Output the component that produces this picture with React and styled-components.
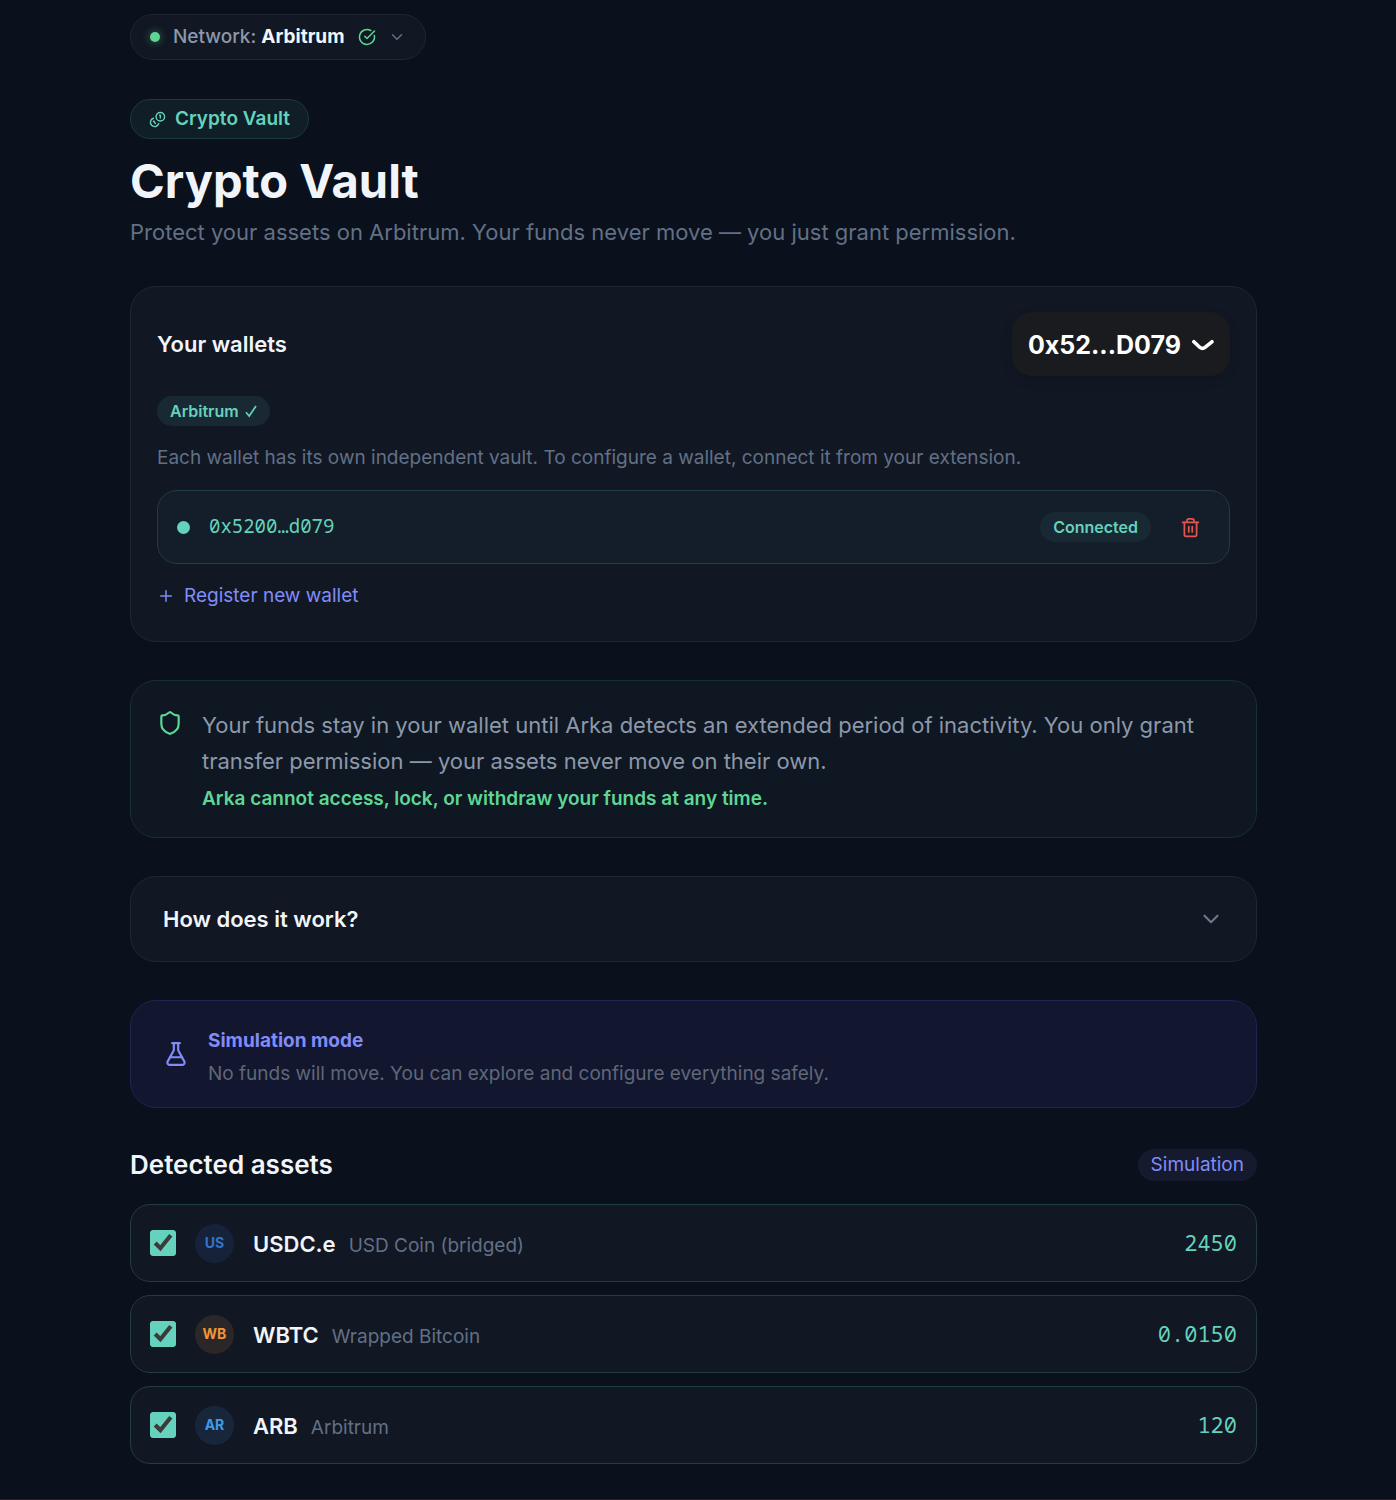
import React, { useState } from 'react'
import styled, { createGlobalStyle } from 'styled-components'
import { ChevronDown, CircleCheckBig, FlaskConical, Plus, Shield, Trash2 } from 'lucide-react'

const colors = {
  background: '#0a101c',
  card: '#111723',
  border: '#1f2632',
  white: '#f1f5f9',
  grey: '#8d98aa',
  muted: '#627086',
  teal: '#64d2bc',
  tealBorder: '#213c44',
  green: '#5fd695',
  purple: '#818cf8',
  red: '#e5534f',
}

const mono = '"Noto Sans Mono", "DejaVu Sans Mono", monospace'

const ASSETS = [
  { symbol: 'USDC.e', name: 'USD Coin (bridged)', balance: '2450', color: '#3674c8', background: '#15223a' },
  { symbol: 'WBTC', name: 'Wrapped Bitcoin', balance: '0.0150', color: '#f0953a', background: '#2b2628' },
  { symbol: 'ARB', name: 'Arbitrum', balance: '120', color: '#4399e6', background: '#18263c' },
]

const GlobalStyle = createGlobalStyle`
  * {
    box-sizing: border-box;
  }

  body {
    margin: 0;
    background: ${colors.background};
    color: ${colors.white};
    font-family: Inter, sans-serif;
    font-size: 19px;
    line-height: 28px;
  }

  h1, h2, p {
    margin: 0;
  }

  button {
    font: inherit;
    color: inherit;
    border: 0;
    background: none;
    padding: 0;
    cursor: pointer;
  }
`;

const Page = styled.main`
  padding: 14px 139px 35px 130px;
  border-bottom: 1px solid #2a2430;
`;

const NetworkButton = styled.button`
  display: flex;
  align-items: center;
  height: 46px;
  padding: 0 19px;
  border: 1px solid ${colors.border};
  border-radius: 23px;
  background: ${colors.card};
  color: ${colors.grey};
  font-weight: 500;

  strong {
    color: ${colors.white};
    font-weight: 700;
  }
`;

const NetworkLabel = styled.span`
  margin: 0 13px;
`;

const NetworkChevron = styled(ChevronDown)`
  margin-left: 12px;
  color: ${colors.muted};
`;

const Dot = styled.span`
  flex: none;
  width: ${props => props.$size}px;
  height: ${props => props.$size}px;
  border-radius: 50%;
  background: ${props => props.$color};
  box-shadow: ${props => props.$glow ? `0 0 8px ${props.$color}80` : 'none'};
`;

const Header = styled.header`
  margin: 39px 0 37px;
`;

const VaultBadge = styled.span`
  display: inline-flex;
  align-items: center;
  gap: 9px;
  height: 40px;
  padding: 0 18px;
  border: 1px solid #1c3a40;
  border-radius: 20px;
  background: #101e28;
  color: ${colors.teal};
  font-weight: 600;
`;

const Title = styled.h1`
  margin-top: 12px;
  font-size: 47px;
  line-height: 60px;
  font-weight: 700;
`;

const Subtitle = styled.p`
  margin-top: 4px;
  color: ${colors.muted};
  font-size: 22px;
  line-height: 34px;
`;

const Stack = styled.div`
  display: flex;
  flex-direction: column;
  gap: 38px;
`;

const Card = styled.section`
  border: 1px solid ${props => props.$border || colors.border};
  border-radius: 26px;
  background: ${props => props.$background || colors.card};
`;

const WalletsCard = styled(Card)`
  padding: 25px 26px 31px;
`;

const SplitRow = styled.div`
  display: flex;
  align-items: center;
  justify-content: space-between;
`;

const CardTitle = styled.h2`
  font-size: 22px;
  font-weight: 600;
`;

const AccountButton = styled.button`
  display: flex;
  align-items: center;
  gap: 10px;
  height: 64px;
  padding: 2px 16px 0;
  border-radius: 20px;
  background: #1a1b1f;
  color: #fff;
  font-size: 25px;
  font-weight: 700;
  box-shadow: 0 4px 12px rgba(0, 0, 0, 0.1);
`;

const Chip = styled.span`
  display: inline-flex;
  align-items: center;
  gap: 6px;
  height: 30px;
  padding: 0 13px;
  border-radius: 15px;
  background: #192933;
  color: ${colors.teal};
  font-size: 16px;
  font-weight: 600;
`;

const ChipRow = styled.div`
  display: flex;
  margin-top: 20px;
`;

const Hint = styled.p`
  margin-top: 18px;
  color: ${colors.muted};
`;

const WalletRow = styled.div`
  display: flex;
  align-items: center;
  height: 74px;
  margin-top: 18px;
  padding: 0 28px 0 19px;
  border: 1px solid ${colors.tealBorder};
  border-radius: 20px;
  background: #141e2a;
`;

const Address = styled.span`
  flex: 1;
  margin-left: 19px;
  padding-bottom: 2px;
  color: ${colors.teal};
  font-family: ${mono};
`;

const DeleteButton = styled.button`
  display: flex;
  margin-left: 29px;
  color: ${colors.red};
`;

const RegisterButton = styled.button`
  display: flex;
  align-items: center;
  gap: 9px;
  margin-top: 18px;
  color: ${colors.purple};
`;

const InfoCard = styled(Card)`
  display: flex;
  gap: 19px;
  padding: 26px 26px 21px;
`;

const InfoIcon = styled(Shield)`
  flex: none;
  margin-top: 3px;
  color: ${colors.green};
`;

const InfoText = styled.p`
  color: ${colors.grey};
  font-size: 22px;
  line-height: 36px;
`;

const InfoStrong = styled.p`
  margin-top: 3px;
  color: ${colors.green};
  font-weight: 600;
  line-height: 34px;
`;

const HowButton = styled.button`
  display: flex;
  align-items: center;
  justify-content: space-between;
  width: 100%;
  height: 84px;
  padding: 0 32px;
  font-size: 22px;
  font-weight: 600;
`;

const SimulationCard = styled(Card)`
  display: flex;
  align-items: center;
  gap: 19px;
  padding: 17px 32px;
  color: ${colors.purple};
`;

const SimulationBody = styled.div`
  padding-top: 7px;
`;

const SimulationTitle = styled.p`
  font-weight: 700;
  line-height: 32px;
`;

const SimulationText = styled.p`
  color: #5f6878;
  line-height: 33px;
`;

const AssetsHeader = styled(SplitRow)`
  margin: 3px 0 23px;
`;

const AssetsTitle = styled.h2`
  font-size: 26px;
  line-height: 32px;
  font-weight: 600;
`;

const SimulationTag = styled.span`
  height: 32px;
  padding: 0 13px;
  border-radius: 16px;
  background: #151a2e;
  color: ${colors.purple};
  line-height: 32px;
`;

const AssetList = styled.div`
  display: flex;
  flex-direction: column;
  gap: 13px;
`;

const AssetRow = styled.label`
  display: flex;
  align-items: center;
  height: 78px;
  padding: 0 19px;
  border: 1px solid ${colors.tealBorder};
  border-radius: 20px;
  background: ${colors.card};
  cursor: pointer;
`;

const Checkbox = styled.input`
  width: 26px;
  height: 26px;
  margin: 0;
  accent-color: ${colors.teal};
  clip-path: inset(0 round 3px);
`;

const AssetIcon = styled.span`
  display: grid;
  place-items: center;
  width: 39px;
  height: 39px;
  margin: 0 19px;
  border-radius: 50%;
  background: ${props => props.$background};
  color: ${props => props.$color};
  font-size: 14px;
  font-weight: 700;
`;

const AssetNames = styled.span`
  display: flex;
  flex: 1;
  align-items: baseline;
  gap: 13px;
  padding-top: 4px;
  color: ${colors.muted};

  strong {
    color: ${colors.white};
    font-size: 22px;
    font-weight: 600;
  }
`;

const Balance = styled.span`
  padding-bottom: 2px;
  color: ${colors.teal};
  font-family: ${mono};
  font-size: 22px;
`;

function CoinsIcon() {
  return (
    <svg
      width="17"
      height="17"
      viewBox="0 0 24 24"
      fill="none"
      stroke="currentColor"
      strokeWidth="2"
      strokeLinecap="round"
      strokeLinejoin="round"
      aria-hidden="true"
    >
      <path d="M13.744 17.736a6 6 0 1 1-7.48-7.48" />
      <path d="M15 6h1v4" />
      <path d="m6.134 14.768.866-.5 2 3.464" />
      <circle cx="16" cy="8" r="6" />
    </svg>
  )
}

function TickIcon() {
  return (
    <svg width="12" height="14" viewBox="0 0 12 14" fill="none" aria-hidden="true">
      <path d="M1 8.2L4.2 12L11 2" stroke="currentColor" strokeWidth="1.7" />
    </svg>
  )
}

function AccountChevron() {
  return (
    <svg width="23" height="12" viewBox="0 0 14 7" fill="none" aria-hidden="true">
      <path
        d="M12.75 1.54L8.516 5.004a2.4 2.4 0 0 1-3.032 0L1.75 1.54"
        stroke="currentColor"
        strokeWidth="2.2"
        strokeLinecap="round"
        strokeLinejoin="round"
      />
    </svg>
  )
}

function Asset({ asset }) {
  const [checked, setChecked] = useState(true)

  return (
    <AssetRow>
      <Checkbox type="checkbox" checked={checked} onChange={e => setChecked(e.target.checked)} />
      <AssetIcon $color={asset.color} $background={asset.background}>
        {asset.symbol.slice(0, 2)}
      </AssetIcon>
      <AssetNames>
        <strong>{asset.symbol}</strong>
        <span>{asset.name}</span>
      </AssetNames>
      <Balance>{asset.balance}</Balance>
    </AssetRow>
  )
}

export default function App() {
  return (
    <>
      <GlobalStyle />
      <Page>
        <NetworkButton type="button">
          <Dot $size={10} $color={colors.green} $glow />
          <NetworkLabel>Network: <strong>Arbitrum</strong></NetworkLabel>
          <CircleCheckBig size={18} color={colors.green} />
          <NetworkChevron size={18} />
        </NetworkButton>

        <Header>
          <VaultBadge>
            <CoinsIcon />
            Crypto Vault
          </VaultBadge>
          <Title>Crypto Vault</Title>
          <Subtitle>Protect your assets on Arbitrum. Your funds never move — you just grant permission.</Subtitle>
        </Header>

        <Stack>
          <WalletsCard>
            <SplitRow>
              <CardTitle>Your wallets</CardTitle>
              <AccountButton type="button">
                0x52...D079
                <AccountChevron />
              </AccountButton>
            </SplitRow>
            <ChipRow>
              <Chip>
                Arbitrum
                <TickIcon />
              </Chip>
            </ChipRow>
            <Hint>Each wallet has its own independent vault. To configure a wallet, connect it from your extension.</Hint>
            <WalletRow>
              <Dot $size={13} $color={colors.teal} />
              <Address>0x5200…d079</Address>
              <Chip>Connected</Chip>
              <DeleteButton type="button" aria-label="Remove wallet">
                <Trash2 size={21} />
              </DeleteButton>
            </WalletRow>
            <RegisterButton type="button">
              <Plus size={18} />
              Register new wallet
            </RegisterButton>
          </WalletsCard>

          <InfoCard $background="#0e1722" $border="#1a2e35">
            <InfoIcon size={26} />
            <div>
              <InfoText>
                Your funds stay in your wallet until Arka detects an extended period of inactivity. You only grant
                transfer permission — your assets never move on their own.
              </InfoText>
              <InfoStrong>Arka cannot access, lock, or withdraw your funds at any time.</InfoStrong>
            </div>
          </InfoCard>

          <Card>
            <HowButton type="button">
              How does it work?
              <ChevronDown size={26} color="#6b7688" />
            </HowButton>
          </Card>

          <SimulationCard $background="#12162e" $border="#20244e">
            <FlaskConical size={26} />
            <SimulationBody>
              <SimulationTitle>Simulation mode</SimulationTitle>
              <SimulationText>No funds will move. You can explore and configure everything safely.</SimulationText>
            </SimulationBody>
          </SimulationCard>

          <section>
            <AssetsHeader>
              <AssetsTitle>Detected assets</AssetsTitle>
              <SimulationTag>Simulation</SimulationTag>
            </AssetsHeader>
            <AssetList>
              {
                ASSETS.map(asset => (
                  <Asset key={asset.symbol} asset={asset} />
                ))
              }
            </AssetList>
          </section>
        </Stack>
      </Page>
    </>
  )
}
